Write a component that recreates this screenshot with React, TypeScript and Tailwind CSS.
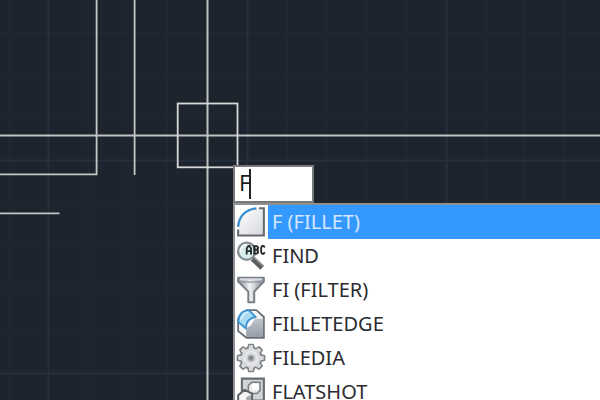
import React, { useState } from 'react';

// Drawing canvas grid: every fifth line is a major one
const minorX = [10, 88, 128, 167, 207, 287, 326, 366, 406, 486, 524, 564];
const majorX = [48, 247, 446];
const minorY = [33, 75, 118, 203, 245, 288, 330];
const majorY = [160, 373];

const DrawingCanvas = () => (
  <svg className="absolute inset-0 w-full h-full" aria-hidden="true" fill="none">
    <g stroke="#202731" strokeWidth="2">
      {minorX.map((x) => (
        <line key={x} x1={x} x2={x} y1="0" y2="100%" />
      ))}
      {minorY.map((y) => (
        <line key={y} x1="0" x2="100%" y1={y} y2={y} />
      ))}
    </g>
    <g stroke="#272e3c" strokeWidth="2">
      {majorX.map((x) => (
        <line key={x} x1={x + 0.5} x2={x + 0.5} y1="0" y2="100%" />
      ))}
      {majorY.map((y) => (
        <line key={y} x1="0" x2="100%" y1={y + 0.5} y2={y + 0.5} />
      ))}
    </g>

    {/* Wall lines */}
    <g stroke="#c4c6c7" strokeWidth="1.8">
      <path d="M0 174.4H96.6V0" />
      <path d="M134.6 0V175" />
      <path d="M0 213.4H59.5" />
    </g>

    {/* Crosshair and pick box */}
    <g stroke="#bfc1c2" strokeWidth="2">
      <line x1="207.5" x2="207.5" y1="0" y2="100%" />
      <line x1="0" x2="100%" y1="135.6" y2="135.6" />
    </g>
    <rect x="177.7" y="103.5" width="59.8" height="63.8" stroke="#d6d8d9" strokeWidth="1.8" />
  </svg>
);

const iconClass = 'w-7 h-[30px] overflow-visible';

const FilletIcon = () => (
  <svg viewBox="1 1 26 28" className={iconClass} fill="none">
    <defs>
      <linearGradient id="fillet" x1="0" y1="0" x2="1" y2="1">
        <stop offset="0" stopColor="#fff" />
        <stop offset="1" stopColor="#d4d7dc" />
      </linearGradient>
    </defs>
    <path d="M2 27.5V21C2.5 11 10 2.5 20 2.2H26V27.5Z" fill="url(#fillet)" />
    <path d="M21.5 2.2H26V27.5H2V22" stroke="#65686c" strokeWidth="1.9" />
    <path d="M2 19.5C2.5 10 9 3 19 2.2" stroke="#338bd0" strokeWidth="2.1" />
  </svg>
);

const FindIcon = () => (
  <svg viewBox="1 1 26 28" className={iconClass} fill="none">
    <path d="M15.5 17.5L24.5 26" stroke="#5b5f62" strokeWidth="5" />
    <path d="M17 16.5L25.5 24.5" stroke="#95999b" strokeWidth="1.2" />
    <circle cx="10" cy="10.5" r="8" fill="#d8eced" stroke="#868f90" strokeWidth="2.2" />
    <path d="M4 11A6 6 0 0 1 10 4.5" stroke="#fff" strokeWidth="1.6" />
    <g stroke="#252829" strokeWidth="1.7">
      <path d="M10 13.5V8L11.5 5.5H12.5L14 8V13.5M10 10.5H14" />
      <path d="M17 5V13.5M17 5.8H19.5L20.5 7V8.2L19.5 9H17M19.3 9L20.5 10.2V11.8L19.5 12.8H17" />
      <path d="M26.8 7L25.8 5.5H24.5L23.5 7V11.5L24.5 13H25.8L26.8 11.5" />
    </g>
  </svg>
);

const FilterIcon = () => (
  <svg viewBox="1 1 26 28" className={iconClass} fill="none">
    <defs>
      <linearGradient id="funnel" x1="0" y1="0" x2="1" y2="0">
        <stop offset="0" stopColor="#878e99" />
        <stop offset=".45" stopColor="#f2f3f5" />
        <stop offset="1" stopColor="#868d97" />
      </linearGradient>
    </defs>
    <path d="M2 3.5H26V7L17 16.5V26.5H11.5V16.5L2 7Z" fill="url(#funnel)" stroke="#7b7f87" strokeWidth="1.9" strokeLinejoin="round" />
    <path d="M3.5 5H24.5" stroke="#d8dce2" strokeWidth="1.8" />
    <path d="M4.5 7.5H23.5" stroke="#8d939e" strokeWidth="1.2" />
  </svg>
);

const FilletEdgeIcon = () => (
  <svg viewBox="1 1 26 28" className={iconClass} fill="none">
    <defs>
      <linearGradient id="edge" x1="0" y1="0" x2="0" y2="1">
        <stop offset="0" stopColor="#c0c5cd" />
        <stop offset="1" stopColor="#969da8" />
      </linearGradient>
    </defs>
    <path d="M10 2H19L26 8.5V28H10L2 21.5V10Z" fill="#f7f8f9" stroke="#6b6f75" strokeWidth="1.7" strokeLinejoin="round" />
    <path d="M9.5 18.5C14 17.5 15.500 14 17.500 10H25.3V27.2H9.500Z" fill="url(#edge)" />
    <path d="M2 13C2.2 6.5 6 2 12 2L18.5 8.5C12.5 9 9.5 13 9 19L2 13Z" fill="#a8dbf3" stroke="#3a91d2" strokeWidth="1.7" strokeLinejoin="round" />
    <path d="M4.5 11C5.5 7 8 4.5 11.5 4" stroke="#daf2fc" strokeWidth="1.5" />
  </svg>
);

const GearIcon = () => (
  <svg viewBox="1 1 26 28" className={iconClass} fill="none">
    <g transform="translate(14 15)">
      <g fill="#d8dadc" stroke="#808386" strokeWidth="1.6" strokeLinejoin="round">
        {[0, 45, 90, 135, 180, 225, 270, 315].map((a) => (
          <path key={a} d="M-3.2 -8.5L-2 -12.6H2L3.2 -8.5" transform={`rotate(${a})`} />
        ))}
        <circle r="9.8" />
      </g>
      <g fill="#d8dadc">
        {[0, 45, 90, 135, 180, 225, 270, 315].map((a) => (
          <path key={a} d="M-2.400 -8L-1.600 -11.6H1.6L2.4 -8Z" transform={`rotate(${a})`} />
        ))}
      </g>
      <circle r="6" stroke="#e8e9ea" strokeWidth="1.5" />
      <circle r="2.4" fill="#7d8083" stroke="#a3a5a8" strokeWidth="1.5" />
    </g>
  </svg>
);

const FlatshotIcon = () => (
  <svg viewBox="1 1 26 28" className={iconClass} fill="none">
    <path d="M5.5 2.5H26V23H5.5Z" fill="#d3d4d7" stroke="#696c70" strokeWidth="2" />
    <path d="M11.500 9L14.500 6H22.500V13.500L19.500 16.500H11.500Z" fill="#e9eaeb" stroke="#7a7d81" strokeWidth="1.4" />
    <path d="M15 7.500H21V13H15Z" fill="#fff" />
    <path d="M2 18L8 13L15 16.5V25L9 29L2 26Z" fill="#f5f5f6" stroke="#5d6064" strokeWidth="1.9" strokeLinejoin="round" />
    <path d="M9.5 20L14.2 17.5V24.8L9.5 27.8Z" fill="#a6a9ae" />
  </svg>
);

const commands = [
  { label: 'F (FILLET)', icon: FilletIcon },
  { label: 'FIND', icon: FindIcon },
  { label: 'FI (FILTER)', icon: FilterIcon },
  { label: 'FILLETEDGE', icon: FilletEdgeIcon },
  { label: 'FILEDIA', icon: GearIcon },
  { label: 'FLATSHOT', icon: FlatshotIcon },
];

export default function App() {
  const [query, setQuery] = useState('F');
  const [selected, setSelected] = useState(0);

  return (
    <main className="relative h-screen overflow-hidden bg-[#1d242d] font-['Noto_Sans',sans-serif]">
      <DrawingCanvas />

      {/* Dynamic input, anchored to the cursor */}
      <div className="absolute left-[233px] top-[165px] right-0">
        <div className="relative w-[81px]">
          <input
            type="text"
            aria-label="Command"
            value={query}
            onChange={(e) => setQuery(e.target.value)}
            className="block w-full h-[38px] pl-1 pb-1 bg-white border-2 border-[#77797b] text-[22px] text-[#1c1c20] caret-transparent outline-none"
          />
          <span className="absolute left-4 top-1 w-[2px] h-[30px] bg-[#222]"></span>
        </div>

        {/* Suggestion list */}
        <ul className="bg-white border-t-2 border-l-2 border-[#8f9193]">
          {commands.map((cmd, i) => {
            const Icon = cmd.icon;
            return (
              <li key={cmd.label}>
                <button
                  type="button"
                  onClick={() => setSelected(i)}
                  className="flex w-full h-[34px] items-center text-left text-xl leading-[34px]"
                >
                  <span className="w-[33px] shrink-0 pl-[2px]">
                    <Icon />
                  </span>
                  <span
                    className={`flex-1 h-full pl-1 whitespace-nowrap ${
                      selected === i ? 'bg-[#3399ff] text-[#d5e7ff]' : 'text-[#2b2b30]'
                    }`}
                  >
                    {cmd.label}
                  </span>
                </button>
              </li>
            );
          })}
        </ul>
      </div>
    </main>
  );
}
